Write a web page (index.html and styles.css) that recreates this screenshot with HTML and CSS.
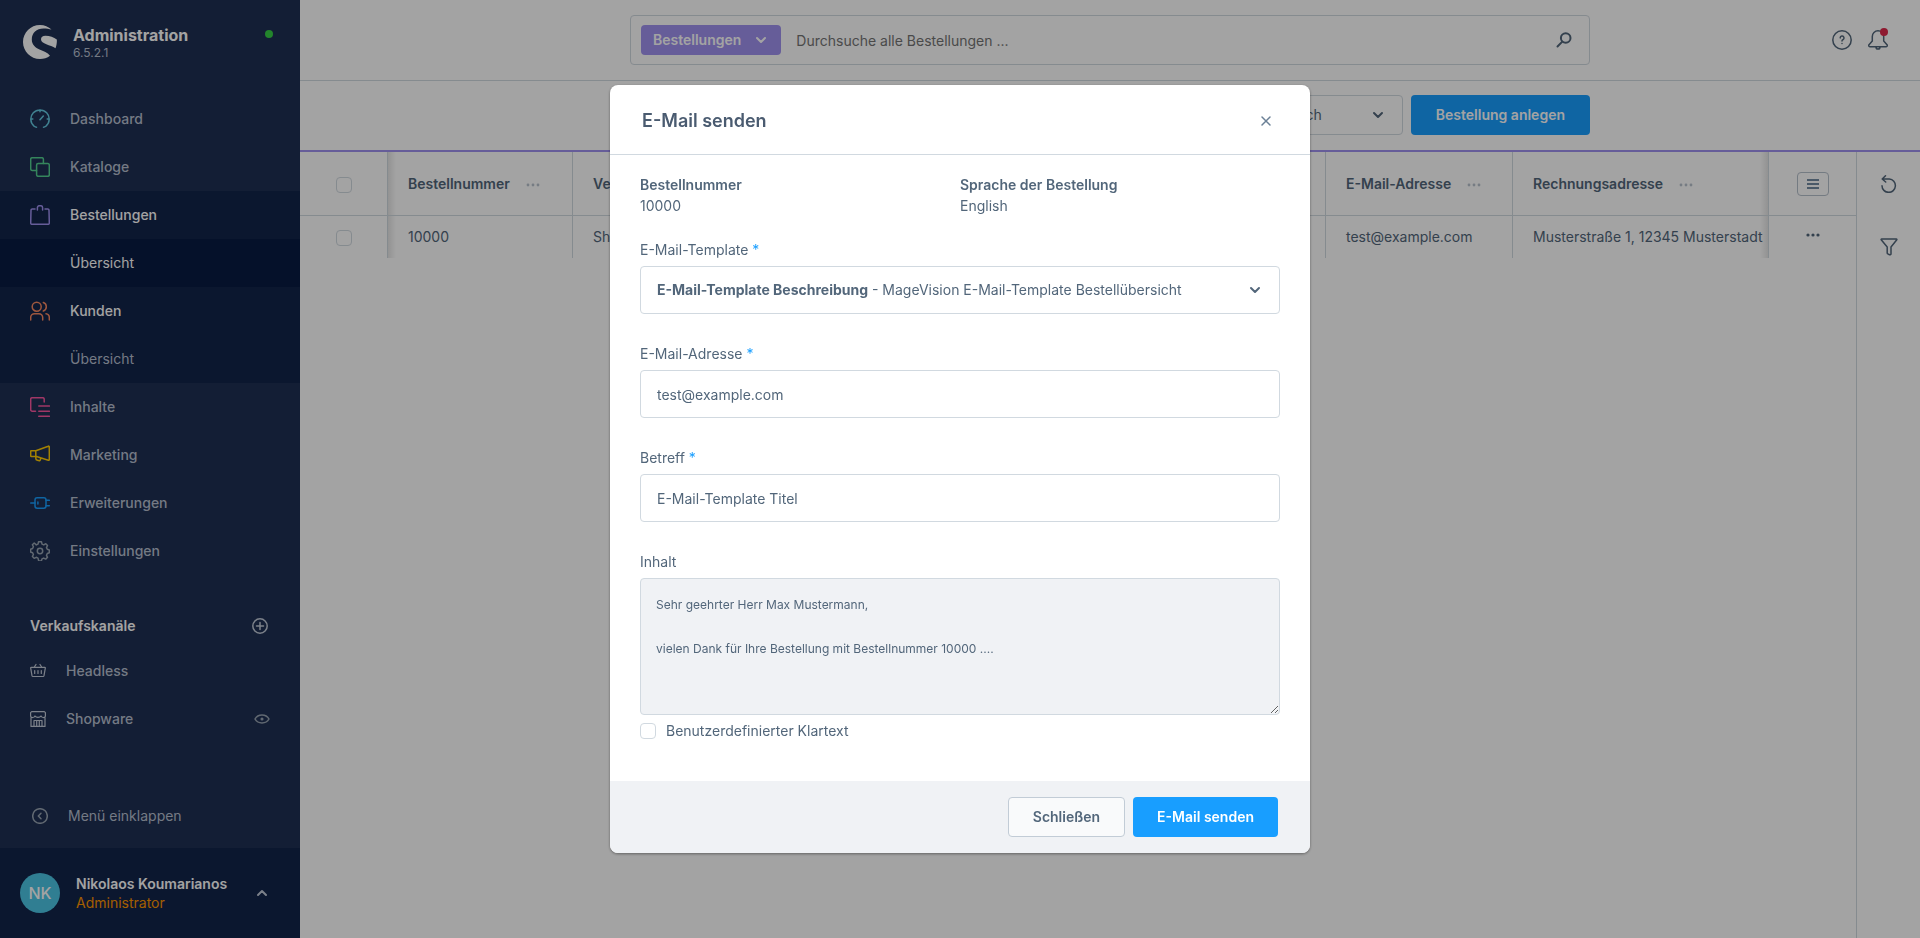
FILE: index.html
```html
<!DOCTYPE html>
<html lang="de">
<head>
<meta charset="utf-8">
<title>Administration – Bestellungen</title>
<link rel="stylesheet" href="styles.css">
</head>
<body>
<div class="app">
  <aside class="sidebar">
    <header class="brand">
      <svg class="brand-logo" viewBox="0 0 34 34" aria-hidden="true"><path d="M28.500 4.600C25.500 1.700 21.500 0 17 0 7.600 0 0 7.600 0 17s7.600 17 17 17c3.700 0 7.200-1.200 10-3.300-2.500-3.300-6.500-4.300-10.500-6.200C12.500 22.600 8.800 20 8.800 14.500 8.800 8 13.500 3.600 20.500 3.600c3 0 5.800.5 8 1z"/><path d="M33.800 14.500c-3-2.300-7-3.700-11.300-3.700-3 0-4.500 1.500-4.500 3.500 0 4.800 9.500 5.600 14.500 9 1-2.700 1.600-5.800 1.300-8.800z"/></svg>
      <div class="brand-text">
        <h1 class="brand-name">Administration</h1>
        <span class="brand-version">6.5.2.1</span>
      </div>
      <span class="brand-status"></span>
    </header>
    <nav class="nav">
      <a class="nav-item" href="#"><svg class="icon c-cyan" viewBox="0 0 20 20"><path d="M6.500 18.200C5 18.200 4.500 17.500 4 17.100A9.200 9.200 0 1 1 16 17.100c-.5.400-1 1.100-2.500 1.100M10 .8v2M.8 10h2M17.200 10h2M10 10.800 13.300 7"/></svg>Dashboard</a>
      <a class="nav-item" href="#"><svg class="icon c-green" viewBox="0 0 20 20"><rect x="6.600" y="6.600" width="12.700" height="12.700" rx="1.500"/><path d="M6.500 13.400H2.200a1.500 1.500 0 0 1-1.500-1.500V2.200A1.500 1.500 0 0 1 2.200.7h9.700a1.500 1.500 0 0 1 1.500 1.500v4.300"/></svg>Kataloge</a>
      <div class="nav-group">
        <a class="nav-item is-active" href="#"><svg class="icon c-purple" viewBox="0 0 20 20"><path d="M5 4H2.200a1.200 1.200 0 0 0-1.200 1.200L.7 18a1.300 1.300 0 0 0 1.300 1.300h16a1.300 1.300 0 0 0 1.300-1.300L19 5.200A1.200 1.200 0 0 0 17.800 4H15M7.400 5V2.700A2 2 0 0 1 9.400.7h1.200a2 2 0 0 1 2 2V5"/></svg>Bestellungen</a>
        <a class="nav-item nav-sub is-current" href="#">Übersicht</a>
        <a class="nav-item is-active" href="#"><svg class="icon c-red" viewBox="0 0 20 20"><circle cx="6.700" cy="5.700" r="4.500"/><path d="M.7 19v-2.500A3.800 3.800 0 0 1 4.500 12.700h4.400a3.800 3.800 0 0 1 3.800 3.800V19M13.300 1.500a4.500 4.500 0 0 1 0 8.500M16 12.700a3.800 3.800 0 0 1 3.300 3.800V19"/></svg>Kunden</a>
        <a class="nav-item nav-sub" href="#">Übersicht</a>
      </div>
      <a class="nav-item" href="#"><svg class="icon c-pink" viewBox="0 0 20 20"><path d="M5.500 14.200H2.200a1.500 1.500 0 0 1-1.500-1.500V2.200A1.500 1.500 0 0 1 2.200.7h10.500a1.500 1.500 0 0 1 1.500 1.500V5M8.800 9h10.600M8.800 14.200h10.600M8.800 19.300h10.600"/></svg>Inhalte</a>
      <a class="nav-item" href="#"><svg class="icon c-yellow" viewBox="0 0 20 20"><path d="M5.800 5.800 18.300 1.200a.7.700 0 0 1 1 .7v12.600a.7.700 0 0 1-1 .7L5.800 11.300M.7 6.300a.6.600 0 0 1 .6-.6h4.500v5.700H1.300a.6.600 0 0 1-.6-.6zM5.800 11.500v1.800a2 2 0 0 0 1.600 2l1.200.3a1.600 1.600 0 0 0 2-1.600v-1"/></svg>Marketing</a>
      <a class="nav-item" href="#"><svg class="icon c-blue" viewBox="0 0 20 20"><path d="M.7 10H5M7.900 9v2M16 7.300h3.300M16 12.700h3.300"/><rect x="5" y="4.700" width="11" height="10.600" rx="2.200"/></svg>Erweiterungen</a>
      <a class="nav-item" href="#"><svg class="icon c-gray" viewBox="0 0 20 20"><circle cx="10" cy="10" r="2.700"/><path d="M8.500.8h3l.5 2.300 1.800.8 2-1.200 1.700 1.800-1 2.100.8 1.700 2 .7v2.800l-2 .7-.8 1.800 1 2-1.800 1.800-2-1-1.700.8-.7 2.100H8.700L8 17.100l-1.800-.8-2 1-1.800-1.800 1-2-.8-1.800-2-.7V8.200l2-.7.8-1.700-1-2.100L4.200 2l2.100 1.900L8 3.100z"/></svg>Einstellungen</a>
    </nav>
    <section class="channels">
      <div class="channels-head"><h2 class="channels-title">Verkaufskanäle</h2><button class="icon-button" aria-label="Verkaufskanal hinzufügen"><svg class="icon-s c-light" viewBox="0 0 16 16"><circle cx="8" cy="8" r="7.200"/><path d="M8 4.500v7M4.500 8h7"/></svg></button></div>
      <a class="channel" href="#"><svg class="icon-s c-light" viewBox="0 0 16 16"><path d="M1.200 4.300h13.600a.6.600 0 0 1 .5.800L14 12.700a1 1 0 0 1-1 .8H3a1 1 0 0 1-1-.8L.7 5.100a.6.600 0 0 1 .5-.8zM4.300 4 6 1.500M11.700 4 10 1.500M4.700 7.500v3M8 7.500v3M11.300 7.500v3"/></svg>Headless</a>
      <a class="channel" href="#"><svg class="icon-s c-light" viewBox="0 0 16 16"><path d="M1 6.500v8.900h14V6.500M.6 5V1.700L1.700.6h12.600l1.100 1.100V5M.6 5.200C1.500 7 4 7 5 5c1.200 1.800 4.800 1.800 6 0 1 2 3.500 2 4.400.2M4 15V9.500h8V15M6.700 15V9.500M9.300 15V9.500"/></svg>Shopware<svg class="channel-eye c-gray" viewBox="0 0 16 16"><path d="M1 8C4 2.700 12 2.700 15 8 12 13.300 4 13.300 1 8z"/><circle cx="8" cy="8" r=".8"/></svg></a>
    </section>
    <button class="collapse"><svg class="icon-s c-gray" viewBox="0 0 16 16"><circle cx="8" cy="8" r="7.300"/><path d="M9 5.300 6.300 8 9 10.700"/></svg>Menü einklappen</button>
    <footer class="user">
      <span class="avatar">NK</span>
      <div class="user-text"><strong class="user-name">Nikolaos Koumarianos</strong><span class="user-role">Administrator</span></div>
      <svg class="chevron c-light" viewBox="0 0 12 12"><path d="M2 8 6 4l4 4"/></svg>
    </footer>
  </aside>

  <main class="page">
    <header class="topbar">
      <div class="search">
        <button class="search-type">Bestellungen<svg class="chevron" viewBox="0 0 12 12"><path d="M2 4l4 4 4-4"/></svg></button>
        <input class="search-input" type="text" aria-label="Suche" placeholder="Durchsuche alle Bestellungen ...">
        <svg class="search-icon c-dark" viewBox="0 0 16 16"><circle cx="9.700" cy="6" r="4.800"/><path d="M6.300 9.600 1.500 14.500"/></svg>
      </div>
      <div class="top-actions">
        <button class="icon-button" aria-label="Hilfe"><svg class="icon c-dark" viewBox="0 0 20 20"><circle cx="10" cy="10" r="9.200"/><path d="M8.200 7.900a1.900 1.900 0 1 1 2.700 1.800c-.6.300-.9.600-.9 1.300M10 13.400v.1"/></svg></button>
        <button class="icon-button bell" aria-label="Benachrichtigungen"><svg class="icon c-dark" viewBox="0 0 20 20"><path d="M4.300 11V6.500A5.700 5.700 0 0 1 10 .8a5.700 5.700 0 0 1 5.700 5.700V11l3.300 3.700a1.200 1.200 0 0 1-.8 2H1.800a1.200 1.200 0 0 1-.8-2zM8 17.200a2 1.800 0 0 0 4 0"/></svg><span class="bell-dot"></span></button>
      </div>
    </header>
    <div class="toolbar">
      <div class="toolbar-inner">
        <select class="language" aria-label="Sprache"><option>Deutsch</option></select>
        <button class="button button-primary">Bestellung anlegen</button>
      </div>
    </div>
    <div class="content">
      <div class="grid-wrap">
      <table class="grid">
        <colgroup><col class="col-check"><col class="col-number"><col class="col-channel"><col class="col-mail"><col class="col-address"><col class="col-menu"></colgroup>
        <thead><tr>
          <th class="cell-check"><input class="check" type="checkbox" aria-label="Alle auswählen"></th>
          <th class="shade-left">Bestellnummer<svg class="dots" viewBox="0 0 14 4"><circle cx="2" cy="2" r="1.400"/><circle cx="7" cy="2" r="1.400"/><circle cx="12" cy="2" r="1.400"/></svg></th>
          <th>Verkaufskanal</th>
          <th>E-Mail-Adresse<svg class="dots" viewBox="0 0 14 4"><circle cx="2" cy="2" r="1.400"/><circle cx="7" cy="2" r="1.400"/><circle cx="12" cy="2" r="1.400"/></svg></th>
          <th class="shade-right">Rechnungsadresse<svg class="dots" viewBox="0 0 14 4"><circle cx="2" cy="2" r="1.400"/><circle cx="7" cy="2" r="1.400"/><circle cx="12" cy="2" r="1.400"/></svg></th>
          <th class="cell-menu"><button class="list-button" aria-label="Einstellungen der Liste"><svg class="list-icon" viewBox="0 0 12 12"><path d="M0 2h12M0 6h12M0 10h12"/></svg></button></th>
        </tr></thead>
        <tbody><tr>
          <td class="cell-check"><input class="check" type="checkbox" aria-label="Bestellung 10000"></td>
          <td class="shade-left">10000</td>
          <td>Shopware</td>
          <td>test@example.com</td>
          <td class="shade-right">Musterstraße 1, 12345 Musterstadt</td>
          <td class="cell-menu"><button class="row-menu" aria-label="Aktionen"><svg class="row-dots" viewBox="0 0 14 4"><circle cx="2" cy="2" r="1.600"/><circle cx="7" cy="2" r="1.600"/><circle cx="12" cy="2" r="1.600"/></svg></button></td>
        </tr></tbody>
      </table>
      </div>
      <aside class="rail">
        <button class="icon-button" aria-label="Aktualisieren"><svg class="icon-m c-dark" viewBox="0 0 18 18"><path d="M5.500.8 2.200 4l3.500 3M2.500 4h6.800a6.700 6.700 0 1 1-7.300 6.700"/></svg></button>
        <button class="icon-button" aria-label="Filter"><svg class="icon-m c-dark" viewBox="0 0 18 18"><path d="M1.600 1h14.800a.5.500 0 0 1 .4.800L11 9v6.800a1 1 0 0 1-1.500.9L7.800 15.900a1 1 0 0 1-.6-.9V9L1.200 1.800A.5.500 0 0 1 1.600 1z"/></svg></button>
      </aside>
    </div>
  </main>
</div>

<div class="backdrop">
  <form class="modal" role="dialog" aria-labelledby="modal-title">
    <header class="modal-head"><h2 class="modal-title" id="modal-title">E-Mail senden</h2><button class="icon-button" type="button" aria-label="Dialog schließen"><svg class="close" viewBox="0 0 12 12"><path d="M2 2l8 8M10 2l-8 8"/></svg></button></header>
    <div class="modal-body">
      <dl class="facts">
        <div><dt>Bestellnummer</dt><dd>10000</dd></div>
        <div><dt>Sprache der Bestellung</dt><dd>English</dd></div>
      </dl>
      <div class="field">
        <label class="label" for="template">E-Mail-Template <span class="required">*</span></label>
        <button class="control picker" id="template" type="button"><span><strong>E-Mail-Template Beschreibung</strong> - MageVision E-Mail-Template Bestellübersicht</span><svg class="chevron" viewBox="0 0 12 12"><path d="M2 4l4 4 4-4"/></svg></button>
      </div>
      <div class="field">
        <label class="label" for="mail">E-Mail-Adresse <span class="required">*</span></label>
        <input class="control" id="mail" type="text" value="test@example.com">
      </div>
      <div class="field">
        <label class="label" for="subject">Betreff <span class="required">*</span></label>
        <input class="control" id="subject" type="text" value="E-Mail-Template Titel">
      </div>
      <div class="field field-last">
        <label class="label" for="content">Inhalt</label>
        <textarea class="control area" id="content" readonly>Sehr geehrter Herr Max Mustermann,

vielen Dank für Ihre Bestellung mit Bestellnummer 10000 ....</textarea>
      </div>
      <label class="check-label"><input class="check" type="checkbox">Benutzerdefinierter Klartext</label>
    </div>
    <footer class="modal-foot">
      <button class="button button-plain" type="button">Schließen</button>
      <button class="button button-primary" type="button">E-Mail senden</button>
    </footer>
  </form>
</div>
</body>
</html>
```

FILE: styles.css
```css
* { box-sizing: border-box; }
body { margin: 0; font: 14px/20px Inter, sans-serif; color: #52667a; background: #fff; }
h1, h2, dl, dd { margin: 0; }
button, input, select, textarea { font: inherit; color: inherit; }
button { border: 0; background: none; padding: 0; cursor: pointer; }
a { color: inherit; text-decoration: none; }
svg { flex: none; fill: none; stroke: currentColor; stroke-width: 1.5; stroke-linecap: round; stroke-linejoin: round; }

.app { display: flex; min-height: 100vh; }

/* Sidebar */
.sidebar { width: 300px; flex: none; display: flex; flex-direction: column; background: #1f3053; color: #b6bfcf; }
.brand { display: flex; align-items: flex-start; gap: 16px; padding: 25px 27px 0 23px; height: 95px; }
.brand-logo { width: 34px; height: 34px; fill: #fff; stroke: none; }
.brand-text { flex: 1; display: flex; flex-direction: column; }
.brand-name { font-size: 16px; line-height: 20px; font-weight: 700; color: #fff; }
.brand-version { font-size: 12px; line-height: 16px; }
.brand-status { width: 8px; height: 8px; margin-top: 5px; border-radius: 50%; background: #37d046; }
.nav-item { display: flex; align-items: center; gap: 20px; height: 48px; padding: 0 30px; font-weight: 500; }
.nav-group { background: #12244a; }
.nav-item.is-active { color: #fff; }
.nav-sub { padding-left: 70px; font-weight: 400; }
.nav-sub.is-current { background: #091c42; color: #fff; }
.icon { width: 20px; height: 20px; display: block; }
.icon-m { width: 18px; height: 18px; display: block; }
.icon-s { width: 16px; height: 16px; display: block; }
.icon-button { display: block; }
.c-cyan { color: #65cbe3; }
.c-green { color: #53d091; }
.c-purple { color: #a092f0; }
.c-red { color: #f88962; }
.c-pink { color: #fa56a0; }
.c-yellow { color: #ffcb05; }
.c-blue { color: #189eff; }
.c-gray { color: #98a4b2; }
.c-light { color: #c2cad8; }
.c-dark { color: #52667a; }
.channels { margin-top: 30px; }
.channels-head { display: flex; align-items: center; justify-content: space-between; padding: 0 32px 0 30px; height: 42px; }
.channels-title { font-size: 14px; line-height: 20px; font-weight: 600; color: #fff; }
.channel { display: flex; align-items: center; gap: 20px; height: 48px; padding: 0 30px; font-weight: 500; }
.channel .icon-s { stroke-width: 1.2; }
.channel-eye { width: 16px; height: 16px; margin-left: auto; }
.collapse { display: flex; align-items: center; gap: 20px; height: 48px; margin: auto 0 8px; padding: 0 32px; }
.user { display: flex; align-items: center; gap: 16px; height: 90px; padding: 0 32px 0 20px; background: #12244a; }
.avatar { width: 40px; height: 40px; border-radius: 50%; background: #4cc5e4; color: #fff; font-size: 16px; line-height: 40px; font-weight: 500; text-align: center; }
.user-text { flex: 1; display: flex; flex-direction: column; }
.user-name { line-height: 19px; font-weight: 600; color: #fff; }
.user-role { line-height: 19px; color: #ff9500; }
.chevron { width: 12px; height: 12px; stroke-width: 2; }

/* Page */
.page { flex: 1; min-width: 0; display: flex; flex-direction: column; }
.topbar { display: grid; grid-template-columns: 1fr 960px 1fr; align-items: center; height: 81px; border-bottom: 1px solid #d1d9e0; }
.search { grid-column: 2; display: flex; align-items: center; height: 50px; padding: 0 17px 0 10px; border: 1px solid #d1d9e0; border-radius: 4px; }
.search-type { display: flex; align-items: center; gap: 14px; height: 30px; padding: 0 14px 0 12px; border-radius: 4px; background: #a092f0; color: #fff; font-weight: 600; }
.search-input { flex: 1; padding: 2px 15px 0; border: 0; background: none; outline: 0; }
.search-input::placeholder { color: #757575; }
.search-icon { width: 16px; height: 16px; stroke-width: 2; }
.top-actions { display: flex; justify-content: flex-end; gap: 16px; padding-right: 32px; }
.bell { position: relative; }
.bell-dot { position: absolute; top: -2px; right: 0; width: 8px; height: 8px; border-radius: 50%; background: #de294c; }
.toolbar { display: grid; grid-template-columns: 1fr 960px 1fr; align-items: start; height: 71px; padding-top: 14px; border-bottom: 2px solid #a092f0; }
.toolbar-inner { grid-column: 2; display: flex; justify-content: flex-end; gap: 8px; }
.toolbar .button { padding: 0 25px; }
.language { width: 240px; height: 40px; padding: 0 80px 0 16px; appearance: none; border: 1px solid #d1d9e0; border-radius: 4px; background: url("data:image/svg+xml,%3Csvg xmlns='http://www.w3.org/2000/svg' viewBox='0 0 12 12' fill='none' stroke='%2352667a' stroke-width='2' stroke-linecap='round' stroke-linejoin='round'%3E%3Cpath d='M2 4l4 4 4-4'/%3E%3C/svg%3E") right 18px center / 12px no-repeat; text-align: right; text-align-last: right; }
.button { height: 40px; padding: 0 24px; border-radius: 4px; font-weight: 600; }
.button-primary { background: #189eff; color: #fff; }
.button-plain { border: 1px solid #c2ccd6; background: #f9fafb; }
.content { flex: 1; display: flex; }
.grid-wrap { flex: 1; min-width: 0; }
.grid { width: 100%; table-layout: fixed; border-collapse: separate; border-spacing: 0; }
.col-check { width: 88px; }
.col-number { width: 185px; }
.col-mail { width: 187px; }
.col-address { width: 256px; }
.col-menu { width: 87px; }
.grid th, .grid td { padding: 0 0 0 20px; border-right: 1px solid #d1d9e0; text-align: left; white-space: nowrap; overflow: hidden; }
.grid th { height: 64px; border-bottom: 1px solid #d1d9e0; font-weight: 600; }
.grid td { height: 42px; }
.grid .cell-check, .grid .cell-menu { padding: 0; text-align: center; }
.grid .cell-menu { border-right: 0; }
.grid .shade-left { background: linear-gradient(to right, #e6e6e6, transparent 8px); }
.grid .shade-right { background: linear-gradient(to left, #e6e6e6, transparent 8px); }
.dots { width: 14px; height: 4px; margin-left: 16px; fill: #b9c3cd; stroke: none; vertical-align: middle; }
.check { appearance: none; width: 16px; height: 16px; margin: 0; border: 1px solid #d1d9e0; border-radius: 4px; vertical-align: middle; }
.list-button { display: inline-flex; align-items: center; justify-content: center; width: 32px; height: 24px; border: 1px solid #b6c0cc; border-radius: 4px; vertical-align: middle; }
.list-icon { width: 12px; height: 12px; stroke-width: 2; stroke-linecap: butt; color: #758ca3; }
.row-menu { width: 32px; height: 24px; }
.row-dots { display: block; width: 14px; height: 4px; margin: 0 auto; fill: currentColor; stroke: none; }
.rail { width: 64px; display: flex; flex-direction: column; align-items: center; gap: 45px; padding-top: 23px; border-left: 1px solid #d1d9e0; }

/* Dialog */
.backdrop { position: fixed; inset: 0; display: flex; align-items: center; justify-content: center; background: rgba(0, 0, 0, .36); }
.modal { width: 700px; border-radius: 8px; background: #fff; overflow: hidden; box-shadow: 0 1px 3px rgba(0, 0, 0, .4); }
.modal-head { display: flex; align-items: center; justify-content: space-between; height: 70px; padding: 2px 38px 0 32px; border-bottom: 1px solid #d1d9e0; }
.modal-title { font-size: 18px; line-height: 24px; font-weight: 600; color: #4a5b70; }
.close { display: block; width: 12px; height: 12px; color: #6b8096; }
.modal-body { padding: 19px 30px 40px; }
.facts { display: grid; grid-template-columns: 1fr 1fr; margin-bottom: 22px; }
.facts dt { line-height: 22px; font-weight: 600; }
.facts dd { line-height: 20px; }
.field { margin-bottom: 28px; }
.field-last { margin-bottom: 6px; }
.label { display: block; padding: 2px 0 6px; line-height: 20px; }
.required { color: #189eff; }
.control { display: block; width: 100%; height: 48px; padding: 0 16px; border: 1px solid #d1d9e0; border-radius: 4px; background: #fff; outline: 0; text-align: left; }
.picker { display: flex; align-items: center; justify-content: space-between; padding-right: 18px; }
.picker strong { font-weight: 700; }
.area { height: 137px; padding: 15px; background: #f0f2f5; font-size: 12px; line-height: 22px; resize: vertical; }
.check-label { display: flex; align-items: center; gap: 10px; line-height: 20px; }
.modal-foot { display: flex; justify-content: flex-end; gap: 8px; padding: 16px 32px; background: #f0f2f5; }
```
